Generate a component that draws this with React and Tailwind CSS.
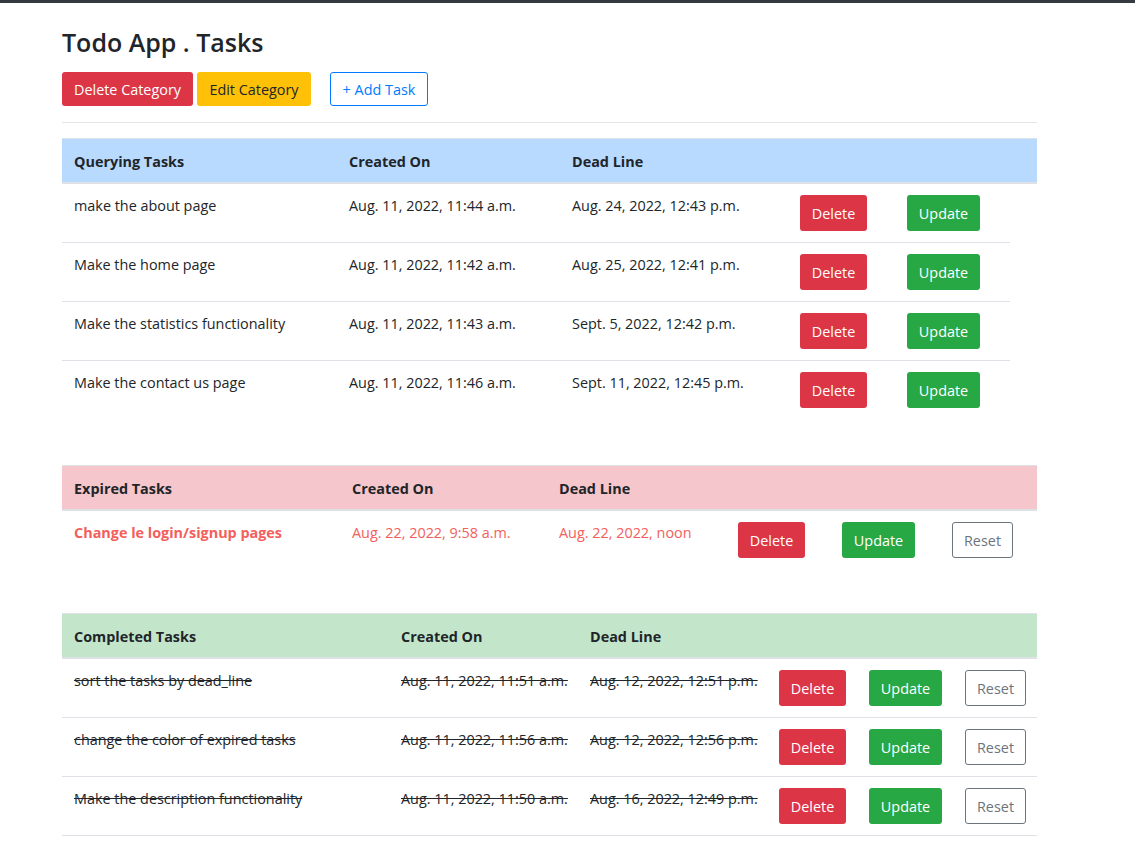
import React from "react";

const querying = [
  { name: "make the about page", created: "Aug. 11, 2022, 11:44 a.m.", dead: "Aug. 24, 2022, 12:43 p.m." },
  { name: "Make the home page", created: "Aug. 11, 2022, 11:42 a.m.", dead: "Aug. 25, 2022, 12:41 p.m." },
  { name: "Make the statistics functionality", created: "Aug. 11, 2022, 11:43 a.m.", dead: "Sept. 5, 2022, 12:42 p.m." },
  { name: "Make the contact us page", created: "Aug. 11, 2022, 11:46 a.m.", dead: "Sept. 11, 2022, 12:45 p.m." },
];

const expired = [
  { name: "Change le login/signup pages", created: "Aug. 22, 2022, 9:58 a.m.", dead: "Aug. 22, 2022, noon" },
];

const completed = [
  { name: "sort the tasks by dead_line", created: "Aug. 11, 2022, 11:51 a.m.", dead: "Aug. 12, 2022, 12:51 p.m." },
  { name: "change the color of expired tasks", created: "Aug. 11, 2022, 11:56 a.m.", dead: "Aug. 12, 2022, 12:56 p.m." },
  { name: "Make the description functionality", created: "Aug. 11, 2022, 11:50 a.m.", dead: "Aug. 16, 2022, 12:49 p.m." },
];

const DeleteBtn = () => (
  <button className="h-[36px] w-[67px] rounded-[3px] bg-[#dc3545] pt-[2px] text-white text-[14.4px] leading-[21.6px]">
    Delete
  </button>
);

const UpdateBtn = () => (
  <button className="h-[36px] w-[73px] rounded-[3px] bg-[#28a745] pt-[2px] text-white text-[14.4px] leading-[21.6px]">
    Update
  </button>
);

const ResetBtn = () => (
  <button className="h-[36px] w-[61px] rounded-[3px] border border-[#6c757d] bg-white pt-[2px] text-[#6c757d] text-[14.4px] leading-[21.6px]">
    Reset
  </button>
);

const Cell = ({ children, className = "" }) => (
  <div className={"pl-[12px] pr-[8px] pt-[11px] pb-[11px] leading-[21.6px] whitespace-nowrap " + className}>{children}</div>
);

const Header = ({ title, bg, cols }) => (
  <div className={"grid h-[46px] border-t border-b-2 border-[#dee2e6] font-bold " + cols + " " + bg}>
    <div className="pl-[12px] pt-[2px] flex items-center">{title}</div>
    <div className="pl-[12px] pt-[2px] flex items-center">Created On</div>
    <div className="pl-[12px] pt-[2px] flex items-center">Dead Line</div>
  </div>
);

export default function App() {
  return (
    <div className="min-h-screen bg-white text-[#212529] text-[14.4px]" style={{ fontFamily: "'Open Sans', 'Noto Sans', sans-serif" }}>
      <div className="h-[3px] bg-[#343a40]" />

      <div className="w-[975px] ml-[62px]">
        {/* Title + actions */}
        <h2 className="mt-[24px] text-[25px] leading-[1.2] font-semibold">Todo App . Tasks</h2>
        <div className="mt-[15px] flex items-center">
          <button className="h-[34px] w-[131px] rounded-[3px] bg-[#dc3545] text-white leading-[21.6px] pt-px">Delete Category</button>
          <button className="ml-[4px] h-[34px] w-[114px] rounded-[3px] bg-[#ffc107] text-[#212529] leading-[21.6px] pt-px">Edit Category</button>
          <button className="ml-[19px] h-[34px] w-[98px] rounded-[3px] border border-[#007bff] text-[#007bff] leading-[21.6px] pt-px">+ Add Task</button>
        </div>
        <div className="mt-[16px] h-px bg-[#e5e5e5]" />

        {/* Querying tasks */}
        <div className="mt-[15px]">
          <Header title="Querying Tasks" bg="bg-[#b8daff]" cols="grid-cols-[275px_223px_228px_107px_115px_27px]" />
          {querying.map((t, i) => (
            <div
              key={t.name}
              className={"grid w-[948px] grid-cols-[275px_223px_228px_107px_115px] " + (i > 0 ? "border-t border-[#dee2e6]" : "")}
            >
              <Cell>{t.name}</Cell>
              <Cell>{t.created}</Cell>
              <Cell>{t.dead}</Cell>
              <Cell><DeleteBtn /></Cell>
              <Cell><UpdateBtn /></Cell>
            </div>
          ))}
        </div>

        {/* Expired tasks */}
        <div className="mt-[46px]">
          <Header title="Expired Tasks" bg="bg-[#f5c6cb]" cols="grid-cols-[278px_207px_179px_104px_110px_97px]" />
          {expired.map((t) => (
            <div key={t.name} className="grid grid-cols-[278px_207px_179px_104px_110px_97px] text-[#f3605c]">
              <Cell className="font-bold">{t.name}</Cell>
              <Cell>{t.created}</Cell>
              <Cell>{t.dead}</Cell>
              <Cell><DeleteBtn /></Cell>
              <Cell><UpdateBtn /></Cell>
              <Cell><ResetBtn /></Cell>
            </div>
          ))}
        </div>

        {/* Completed tasks */}
        <div className="mt-[44px]">
          <Header title="Completed Tasks" bg="bg-[#c3e6cb]" cols="grid-cols-[327px_189px_189px_90px_96px_84px]" />
          {completed.map((t) => (
            <div key={t.name} className="grid grid-cols-[327px_189px_189px_90px_96px_84px] border-b border-[#dee2e6]">
              <Cell className="line-through">{t.name}</Cell>
              <Cell className="line-through">{t.created}</Cell>
              <Cell className="line-through">{t.dead}</Cell>
              <Cell><DeleteBtn /></Cell>
              <Cell><UpdateBtn /></Cell>
              <Cell><ResetBtn /></Cell>
            </div>
          ))}
        </div>
      </div>
    </div>
  );
}
